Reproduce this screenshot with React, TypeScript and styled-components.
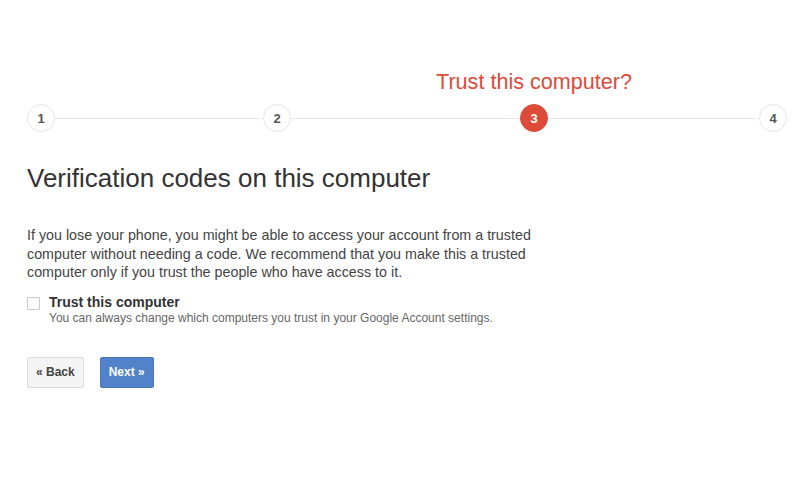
import React from "react";
import styled, { createGlobalStyle } from "styled-components";

const Global = createGlobalStyle`
  html, body { margin: 0; padding: 0; background: #fff; }
  body { font-family: Arial, "Liberation Sans", sans-serif; }
`;

const Page = styled.div`
  width: 800px;
  height: 480px;
  box-sizing: border-box;
  padding: 68px 0 0 27px;
  display: flex;
  flex-direction: column;
  overflow: hidden;
`;

const Stepper = styled.div`
  display: flex;
  height: 64px;
  align-items: flex-end;
`;

const StepItem = styled.div`
  position: relative;
  display: flex;
  align-items: center;
  height: 28px;
`;

const Circle = styled.div<{ $active?: boolean }>`
  width: 28px;
  height: 28px;
  box-sizing: border-box;
  border-radius: 50%;
  display: flex;
  align-items: center;
  justify-content: center;
  font-size: 13px;
  font-weight: bold;
  color: ${(p) => (p.$active ? "#fff" : "#555")};
  background: ${(p) => (p.$active ? "#dd4b39" : "#fff")};
  border: 1px solid ${(p) => (p.$active ? "#dd4b39" : "#e6e6e6")};
`;

const StepLabel = styled.div`
  position: absolute;
  bottom: 37px;
  left: 50%;
  transform: translateX(-50%);
  white-space: nowrap;
  font-size: 21.6px;
  color: #dd4b39;
`;

const ConnectorWrap = styled.div`
  height: 28px;
  display: flex;
  align-items: center;
`;

const Connector = styled.div<{ $w: number }>`
  width: ${(p) => p.$w}px;
  height: 1px;
  background: #e8e8e8;
`;

const Heading = styled.h1`
  margin: 30px 0 0 0;
  font-size: 26px;
  font-weight: normal;
  color: #333;
  line-height: 32px;
`;

const Paragraph = styled.p`
  margin: 32px 0 0 0;
  width: 530px;
  font-size: 14.3px;
  line-height: 18.5px;
  color: #444;
`;

const CheckRow = styled.label`
  margin-top: 12px;
  display: flex;
  align-items: flex-start;
  gap: 9px;
`;

const Box = styled.span`
  width: 13px;
  height: 13px;
  box-sizing: border-box;
  border: 1px solid #c8c8c8;
  border-radius: 1px;
  margin-top: 3px;
  background: #fff;
`;

const CheckText = styled.div`
  display: flex;
  flex-direction: column;
`;

const CheckTitle = styled.span`
  font-size: 14px;
  font-weight: bold;
  color: #333;
  line-height: 17px;
`;

const CheckHint = styled.span`
  font-size: 12px;
  color: #666;
  line-height: 14px;
`;

const Buttons = styled.div`
  margin-top: 32px;
  display: flex;
  gap: 16px;
`;

const Button = styled.button<{ $primary?: boolean }>`
  height: 31px;
  padding: 0 8px;
  box-sizing: border-box;
  font-family: Arial, "Liberation Sans", sans-serif;
  font-size: 12px;
  font-weight: bold;
  border-radius: 2px;
  color: ${(p) => (p.$primary ? "#fff" : "#444")};
  background: ${(p) => (p.$primary ? "#5282c9" : "#f4f4f4")};
  border: 1px solid ${(p) => (p.$primary ? "#4a76b8" : "#dcdcdc")};
`;

const connectors = [208, 229, 211];

export default function App() {
  const steps = [1, 2, 3, 4];
  return (
    <>
      <Global />
      <Page>
        <Stepper>
          {steps.map((n, i) => (
            <React.Fragment key={n}>
              <StepItem>
                {n === 3 && <StepLabel>Trust this computer?</StepLabel>}
                <Circle $active={n === 3}>{n}</Circle>
              </StepItem>
              {i < connectors.length && (
                <ConnectorWrap>
                  <Connector $w={connectors[i]} />
                </ConnectorWrap>
              )}
            </React.Fragment>
          ))}
        </Stepper>
        <Heading>Verification codes on this computer</Heading>
        <Paragraph>
          If you lose your phone, you might be able to access your account from a trusted
          computer without needing a code. We recommend that you make this a trusted
          computer only if you trust the people who have access to it.
        </Paragraph>
        <CheckRow>
          <Box />
          <CheckText>
            <CheckTitle>Trust this computer</CheckTitle>
            <CheckHint>You can always change which computers you trust in your Google Account settings.</CheckHint>
          </CheckText>
        </CheckRow>
        <Buttons>
          <Button>« Back</Button>
          <Button $primary>Next »</Button>
        </Buttons>
      </Page>
    </>
  );
}
